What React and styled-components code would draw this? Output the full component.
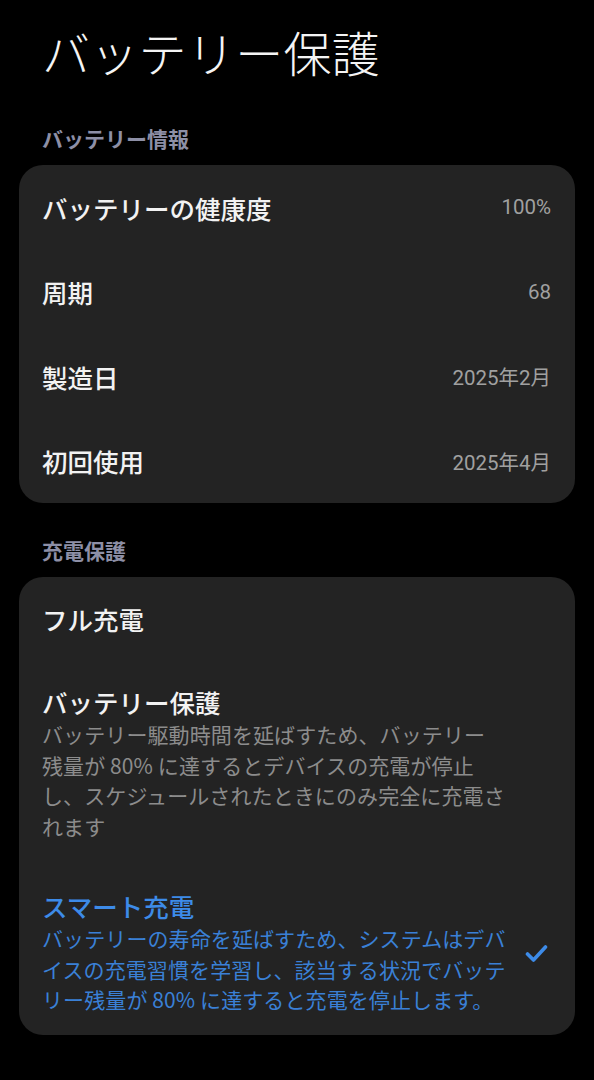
import React from "react";
import styled, { createGlobalStyle } from "styled-components";

const GlobalStyle = createGlobalStyle`
  html, body {
    margin: 0;
    padding: 0;
    background: #000;
  }
  body {
    font-family: "Noto Sans CJK JP", "Roboto", "Noto Sans", sans-serif;
    -webkit-font-smoothing: antialiased;
  }
`;

const Page = styled.div`
  width: 594px;
  min-height: 1080px;
  background: #000;
  padding: 22px 19px 0;
  box-sizing: border-box;
`;

const Title = styled.h1`
  margin: 0 0 44px 23px;
  font-size: 48px;
  line-height: 58px;
  font-weight: 300;
  color: #f4f4f4;
  letter-spacing: 0.3px;
`;

const SectionLabel = styled.div`
  margin: ${(p) => (p.$first ? "0" : "33px")} 0 13px 23px;
  font-size: 21px;
  line-height: 28px;
  font-weight: 700;
  color: #8d8fa6;
`;

const Card = styled.div`
  background: #232323;
  border-radius: 24px;
  padding: ${(p) => p.$pad || "0"};
`;

const Row = styled.div`
  height: 84.5px;
  display: flex;
  align-items: center;
  justify-content: space-between;
  padding: 0 24px 0 23px;
  box-sizing: border-box;
`;

const Label = styled.span`
  font-size: 25.5px;
  font-weight: 500;
  color: #f2f2f2;
`;

const Value = styled.span`
  font-family: "Roboto", "Noto Sans CJK JP", sans-serif;
  font-size: 20.5px;
  color: #a0a0a0;
`;

const Option = styled.div`
  display: flex;
  align-items: center;
  padding: ${(p) => p.$pad};
  box-sizing: border-box;
  min-height: ${(p) => (p.$single ? "84px" : "auto")};
`;

const OptionText = styled.div`
  width: 470px;
`;

const OptionTitle = styled.div`
  font-size: 25.5px;
  line-height: 34px;
  font-weight: 500;
  color: ${(p) => (p.$active ? "#3d8be8" : "#f2f2f2")};
`;

const OptionDesc = styled.div`
  font-size: 21px;
  line-height: 30.7px;
  letter-spacing: 0.1px;
  white-space: nowrap;
  color: ${(p) => (p.$active ? "#3a80d6" : "#8c8c8c")};
`;

const CheckWrap = styled.div`
  flex: 1;
  display: flex;
  justify-content: flex-end;
  padding-top: 4px;
`;

const info = [
  ["バッテリーの健康度", "100%"],
  ["周期", "68"],
  ["製造日", "2025年2月"],
  ["初回使用", "2025年4月"],
];

const protectLines = [
  "バッテリー駆動時間を延ばすため、バッテリー",
  "残量が 80% に達するとデバイスの充電が停止",
  "し、スケジュールされたときにのみ完全に充電さ",
  "れます",
];

const smartLines = [
  "バッテリーの寿命を延ばすため、システムはデバ",
  "イスの充電習慣を学習し、該当する状況でバッテ",
  "リー残量が 80% に達すると充電を停止します。",
];

const Lines = ({ lines }) =>
  lines.map((l, i) => (
    <React.Fragment key={i}>
      {l}
      {i < lines.length - 1 && <br />}
    </React.Fragment>
  ));

export default function App() {
  return (
    <Page>
      <GlobalStyle />
      <Title>バッテリー保護</Title>

      <SectionLabel $first>バッテリー情報</SectionLabel>
      <Card>
        {info.map(([k, v]) => (
          <Row key={k}>
            <Label>{k}</Label>
            <Value>{v}</Value>
          </Row>
        ))}
      </Card>

      <SectionLabel>充電保護</SectionLabel>
      <Card $pad="0 0 20px">
        <Option $single $pad="0 24px 0 23px">
          <OptionText>
            <OptionTitle>フル充電</OptionTitle>
          </OptionText>
        </Option>
        <Option $pad="24px 24px 23px 23px">
          <OptionText>
            <OptionTitle>バッテリー保護</OptionTitle>
            <OptionDesc>
              <Lines lines={protectLines} />
            </OptionDesc>
          </OptionText>
        </Option>
        <Option $pad="24px 27px 0 23px">
          <OptionText>
            <OptionTitle $active>スマート充電</OptionTitle>
            <OptionDesc $active>
              <Lines lines={smartLines} />
            </OptionDesc>
          </OptionText>
          <CheckWrap>
            <svg width="23" height="19" viewBox="0 0 23 19" fill="none">
              <polyline
                points="2.5,10 8.5,16 20.5,3"
                stroke="#3d8be8"
                strokeWidth="3.6"
                strokeLinecap="round"
                strokeLinejoin="round"
              />
            </svg>
          </CheckWrap>
        </Option>
      </Card>
    </Page>
  );
}
